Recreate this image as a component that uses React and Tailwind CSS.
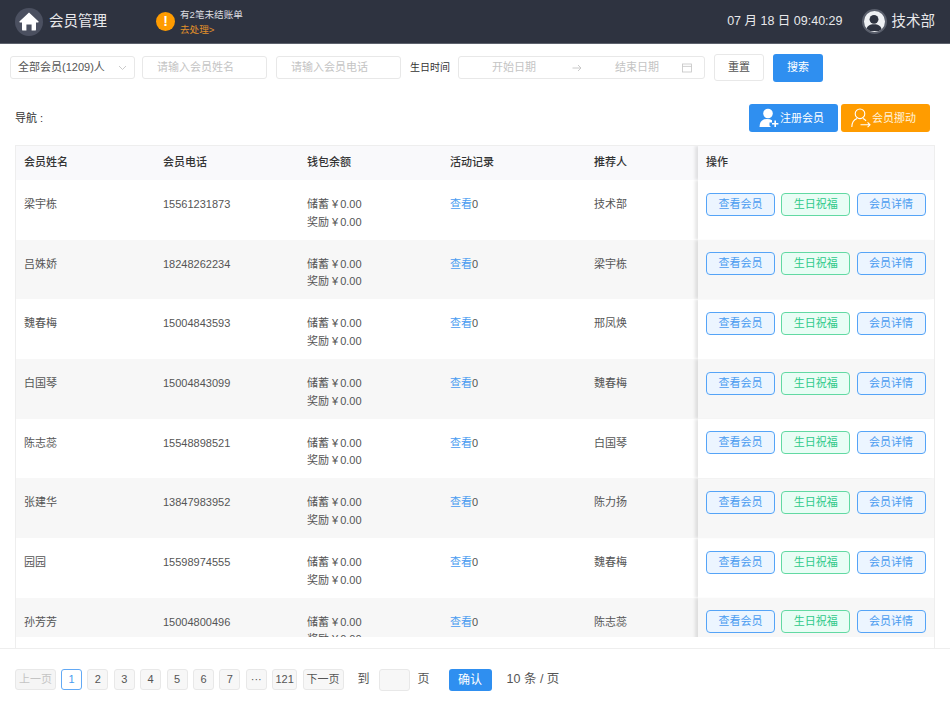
import React from "react";

const rows = [
  ["梁宇栋", "15561231873", "技术部"],
  ["吕姝娇", "18248262234", "梁宇栋"],
  ["魏春梅", "15004843593", "邢凤焕"],
  ["白国琴", "15004843099", "魏春梅"],
  ["陈志蕊", "15548898521", "白国琴"],
  ["张建华", "13847983952", "陈力扬"],
  ["园园", "15598974555", "魏春梅"],
  ["孙芳芳", "15004800496", "陈志蕊"],
];

const cols = "grid grid-cols-[139px_144px_143px_144px_112px_1fr]";

function ActionButton({ green, children }) {
  return (
    <button
      className={
        "w-[69px] h-[23px] rounded-[4px] border text-[11px] leading-[21px] text-center " +
        (green
          ? "border-[#62d9a3] bg-[#e9fdf5] text-[#2fc98a]"
          : "border-[#55a4f7] bg-[#ecf5ff] text-[#4a9cf0]")
      }
    >
      {children}
    </button>
  );
}

function PageButton({ w = "w-[21px]", active, disabled, children }) {
  return (
    <button
      className={
        w +
        " h-[21px] rounded-[3px] border text-[11px] leading-[19px] text-center " +
        (active
          ? "border-[#62a9f5] bg-white text-[#4a9cf0]"
          : disabled
          ? "border-[#e8e8e8] bg-[#f5f5f5] text-[#c4c4c4]"
          : "border-[#e8e8e8] bg-[#f7f7f7] text-[#555555]")
      }
    >
      {children}
    </button>
  );
}

function Field({ w, children }) {
  return (
    <div className={w + " h-[23px] rounded-[3px] border border-[#e8e8e8] bg-white flex items-center text-[11px] text-[#c4c4c4]"}>
      {children}
    </div>
  );
}

export default function App() {
  return (
    <div
      className="w-[950px] h-[712px] overflow-hidden bg-white flex flex-col text-[#555555]"
      style={{ fontFamily: '"Liberation Sans","Noto Sans CJK SC",sans-serif' }}
    >
      <header className="h-[44px] shrink-0 bg-[#2e3340] border-b border-[#5d626d] flex items-center pl-[15px] pr-[15px]">
        <div className="w-[28px] h-[28px] rounded-full bg-[#4b5060] flex items-center justify-center">
          <svg width="20" height="19" viewBox="0 0 20 19" fill="#fff">
            <path d="M10 0.5 L19.6 9.4 Q20 10.4 18.8 10.4 L17 10.4 L17 17.4 Q17 18.6 15.8 18.6 L12.6 18.6 L12.6 12.6 L7.4 12.6 L7.4 18.6 L4.2 18.6 Q3 18.6 3 17.4 L3 10.4 L1.2 10.4 Q0 10.4 0.4 9.4 Z" />
          </svg>
        </div>
        <div className="ml-[6px] text-[14.5px] text-[#e8e8ea]">会员管理</div>
        <div className="ml-[49px] w-[19px] h-[19px] rounded-full bg-[#ff9c00] flex items-center justify-center text-white text-[14px] font-bold">!</div>
        <div className="ml-[5px] flex flex-col text-[9.6px] leading-[15px]">
          <span className="text-[#dcdde0]">有2笔未结账单</span>
          <span className="text-[#e2912a]">去处理&gt;</span>
        </div>
        <div className="ml-auto text-[12.5px] text-[#e8e8ea]">07 月 18 日 09:40:29</div>
        <div className="ml-[19px] w-[25px] h-[25px] rounded-full bg-[#eef0f3] border-2 border-[#5a5f6c] flex items-center justify-center overflow-hidden">
          <svg width="18" height="18" viewBox="0 0 17 17" fill="#2e3340">
            <circle cx="8.5" cy="6" r="4.2" />
            <path d="M1 17 C1.5 12 4.5 10.6 8.5 10.6 C12.5 10.6 15.5 12 16 17 Z" />
          </svg>
        </div>
        <div className="ml-[5px] text-[14.5px] text-[#e8e8ea]">技术部</div>
      </header>

      <div className="h-[47px] shrink-0 flex items-center pl-[10px]">
        <Field w="w-[125px]">
          <span className="pl-[7px] text-[#555555]">全部会员(1209)人</span>
          <svg className="ml-auto mr-[7px]" width="9" height="6" viewBox="0 0 9 6" fill="none" stroke="#c4c4c4" strokeWidth="0.9">
            <path d="M1 1 L4.5 4.5 L8 1" />
          </svg>
        </Field>
        <div className="ml-[7px]">
          <Field w="w-[125px]"><span className="pl-[14px]">请输入会员姓名</span></Field>
        </div>
        <div className="ml-[9px]">
          <Field w="w-[125px]"><span className="pl-[14px]">请输入会员电话</span></Field>
        </div>
        <span className="ml-[9px] w-[44px] text-[10px] text-[#333333]">生日时间</span>
        <div className="ml-[4px]">
          <Field w="w-[247px]">
            <span className="pl-[33px]">开始日期</span>
            <svg className="ml-[36px]" width="10" height="8" viewBox="0 0 10 8" fill="none" stroke="#c4c4c4" strokeWidth="0.9">
              <path d="M0.5 4 H9 M6 1 L9 4 L6 7" />
            </svg>
            <span className="ml-[33px]">结束日期</span>
            <svg className="ml-[23px]" width="10" height="10" viewBox="0 0 10 10" fill="none" stroke="#c4c4c4" strokeWidth="0.8">
              <rect x="0.5" y="1" width="9" height="8" />
              <path d="M0.5 3.4 H9.5" />
            </svg>
          </Field>
        </div>
        <button className="ml-[9px] w-[50px] h-[27px] rounded-[3px] border border-[#e8e8e8] bg-white text-[11px] text-[#555555]">重置</button>
        <button className="ml-[9px] w-[50px] h-[28px] rounded-[3px] bg-[#2f8ff0] text-[11px] text-white">搜索</button>
      </div>

      <div className="h-[54px] shrink-0 flex items-center pl-[15px] pr-[20px]">
        <span className="text-[11px] text-[#333333] pt-[1px]">
          导航<span className="ml-[3px]">:</span>
        </span>
        <button className="ml-auto w-[89px] h-[28px] rounded-[3px] bg-[#2f8ff0] text-[11px] text-white flex items-center pl-[10px] gap-[1px]">
          <svg width="20" height="20" viewBox="0 0 20 20" fill="#fff">
            <circle cx="9" cy="5.5" r="4.8" />
            <path d="M0.5 19 Q0.5 11 8 11 Q11 11 13 12.2 L13 14.5 L10.5 14.5 L10.5 17.4 L12 19 Z" />
            <path d="M15.4 12.6 H17 V15 H19.4 V16.6 H17 V19 H15.4 V16.6 H13 V15 H15.4 Z" />
          </svg>
          注册会员
        </button>
        <button className="ml-[3px] w-[89px] h-[28px] rounded-[3px] bg-[#ff9c00] text-[11px] text-[#fff3dc] flex items-center pl-[10px] gap-[1px]">
          <svg width="20" height="20" viewBox="0 0 20 20" fill="none" stroke="#fff" strokeWidth="1.1">
            <circle cx="9" cy="5.8" r="4.8" />
            <path d="M0.8 19 Q1 12.5 6 10.6 M12 10.6 Q14 11.4 15 13 M9.5 16.8 H19 M16.6 14.4 L19 16.8 L16.6 19.2" />
          </svg>
          会员挪动
        </button>
      </div>

      <div className="h-[503px] shrink-0 ml-[15px] w-[920px] border-x border-t border-[#eeeeee] flex flex-col">
        <div className={cols + " h-[34px] shrink-0 bg-[#f9f9fb] items-center text-[11px] font-medium text-[#333333]"}>
          <div className="pl-[8px] pb-[2px]">会员姓名</div>
          <div className="pl-[8px] pb-[2px]">会员电话</div>
          <div className="pl-[8px] pb-[2px]">钱包余额</div>
          <div className="pl-[8px] pb-[2px]">活动记录</div>
          <div className="pl-[8px] pb-[2px]">推荐人</div>
          <div className="h-full pl-[8px] pb-[2px] flex items-center shadow-[-3px_0_3px_rgba(0,0,0,0.1)] [clip-path:inset(0_0_0_-6px)]">操作</div>
        </div>
        <div className="h-[457px] shrink-0 overflow-hidden">
          {rows.map((r, i) => (
            <div
              key={r[1]}
              className={cols + " h-[59.7px] text-[11px] leading-[17.5px] " + (i % 2 ? "bg-[#f7f7f7]" : "bg-white")}
            >
              <div className="pl-[8px] pt-[16px]">{r[0]}</div>
              <div className="pl-[8px] pt-[16px]">{r[1]}</div>
              <div className="pl-[8px] pt-[16px]">
                <div>储蓄 <span className="mr-[2px]">¥</span>0.00</div>
                <div>奖励 <span className="mr-[2px]">¥</span>0.00</div>
              </div>
              <div className="pl-[8px] pt-[16px]">
                <span className="text-[#4a9cf0]">查看</span>0
              </div>
              <div className="pl-[8px] pt-[16px]">{r[2]}</div>
              <div className="pl-[8px] pt-[12.5px] flex gap-[6.3px] items-start shadow-[-3px_0_3px_rgba(0,0,0,0.1)] [clip-path:inset(0_0_0_-6px)]">
                <ActionButton>查看会员</ActionButton>
                <ActionButton green>生日祝福</ActionButton>
                <ActionButton>会员详情</ActionButton>
              </div>
            </div>
          ))}
        </div>
      </div>

      <div className="flex-1 border-t border-[#eeeeee] flex items-start pt-[20px] pl-[15px] text-[#555555]">
        <PageButton w="w-[41px]" disabled>上一页</PageButton>
        <div className="ml-[5px] flex gap-[5.4px]">
          <PageButton active>1</PageButton>
          <PageButton>2</PageButton>
          <PageButton>3</PageButton>
          <PageButton>4</PageButton>
          <PageButton>5</PageButton>
          <PageButton>6</PageButton>
          <PageButton>7</PageButton>
          <PageButton>···</PageButton>
          <PageButton w="w-[25px]">121</PageButton>
          <PageButton w="w-[41px]">下一页</PageButton>
        </div>
        <span className="ml-[14px] text-[12px] leading-[21px]">到</span>
        <div className="ml-[9px] w-[31px] h-[22px] rounded-[3px] border border-[#e8e8e8] bg-[#f7f7f7]" />
        <span className="ml-[8px] text-[12px] leading-[21px]">页</span>
        <button className="ml-[19px] w-[43px] h-[22px] rounded-[3px] bg-[#2f8ff0] text-[12px] text-white">确认</button>
        <span className="ml-[15px] text-[12.5px] leading-[21px]">10 条 / 页</span>
      </div>
    </div>
  );
}
